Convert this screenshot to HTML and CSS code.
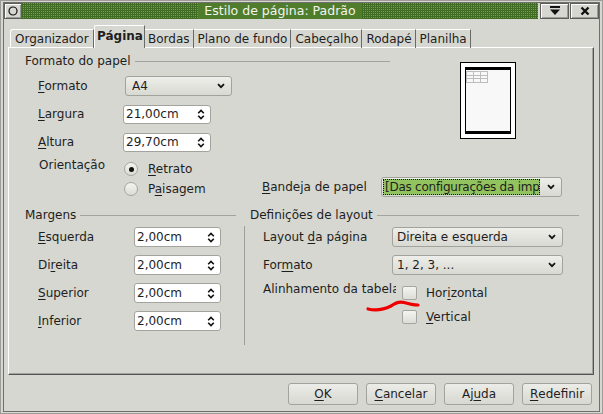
FILE: index.html
```html
<!DOCTYPE html>
<html lang="pt">
<head>
<meta charset="utf-8">
<title>Estilo de página: Padrão</title>
<link rel="stylesheet" href="styles.css">
</head>
<body>
<div class="window">
  <div class="frame">
    <div class="titlebar">
      <div class="tb-btn tb-menu"><svg width="10" height="10" viewBox="0 0 10 10"><circle cx="5" cy="5" r="4" fill="none" stroke="#111" stroke-width="1.2"/></svg></div>
      <div class="tb-title"><span>Estilo de página: Padrão</span></div>
      <div class="tb-btn tb-right"><svg width="12" height="10" viewBox="0 0 12 10"><rect x="1" y="0" width="10" height="2" fill="#111"/><path d="M1 3.5 H11 L6 9 Z" fill="#111"/></svg></div>
      <div class="tb-btn tb-right"><svg width="10" height="10" viewBox="0 0 10 10"><path d="M1.5 1.5 L8.5 8.5 M8.5 1.5 L1.5 8.5" stroke="#111" stroke-width="2.4"/></svg></div>
    </div>
    <div class="client">
      <div class="tabs">
        <div class="tab first">Organizador</div>
        <div class="tab active">Página</div>
        <div class="tab">Bordas</div>
        <div class="tab">Plano de fundo</div>
        <div class="tab">Cabeçalho</div>
        <div class="tab">Rodapé</div>
        <div class="tab">Planilha</div>
      </div>
      <div class="pane">
        <div class="paper">
          <div class="group-head paper-head"><span>Formato do papel</span><i class="rule"></i></div>
          <div class="preview">
            <div class="page">
              <div class="grid-mini"><i></i><i></i><i></i><i></i><i></i><i></i><i></i><i></i><i></i></div>
            </div>
          </div>
          <div class="row r-formato">
            <span class="lbl w85"><u>F</u>ormato</span>
            <div class="select s-a4"><span class="val">A4</span><svg class="chev" width="8" height="6" viewBox="0 0 8 6"><path d="M1 1.2 L4 4.2 L7 1.2" fill="none" stroke="#111" stroke-width="1.8"/></svg></div>
          </div>
          <div class="row r-largura">
            <span class="lbl w85"><u>L</u>argura</span>
            <div class="spin s-paper"><span class="val">21,00cm</span><svg class="arrows" width="8" height="11" viewBox="0 0 8 11"><path d="M1.2 4.3 L4 1.5 L6.8 4.3 M1.2 6.7 L4 9.5 L6.8 6.7" fill="none" stroke="#111" stroke-width="1.6"/></svg></div>
          </div>
          <div class="row r-altura">
            <span class="lbl w85"><u>A</u>ltura</span>
            <div class="spin s-paper"><span class="val">29,70cm</span><svg class="arrows" width="8" height="11" viewBox="0 0 8 11"><path d="M1.2 4.3 L4 1.5 L6.8 4.3 M1.2 6.7 L4 9.5 L6.8 6.7" fill="none" stroke="#111" stroke-width="1.6"/></svg></div>
          </div>
          <div class="orient">
            <span class="lbl w85 orient-lbl">Orientação</span>
            <div class="radios">
              <div class="radio-row"><span class="radio on"><i></i></span><span><u>R</u>etrato</span></div>
              <div class="radio-row"><span class="radio"></span><span>P<u>a</u>isagem</span></div>
            </div>
          </div>
          <div class="bandeja">
            <span class="lbl w119"><u>B</u>andeja de papel</span>
            <div class="select s-tray"><span class="tray-val">[Das configurações da impressora]</span><svg class="chev" width="8" height="6" viewBox="0 0 8 6"><path d="M1 1.2 L4 4.2 L7 1.2" fill="none" stroke="#111" stroke-width="1.8"/></svg></div>
          </div>
        </div>
        <div class="lower">
          <div class="margins">
            <div class="group-head margins-head"><span>Margens</span><i class="rule"></i></div>
            <div class="mrows">
              <div class="row"><span class="lbl w96"><u>E</u>squerda</span><div class="spin s-marg"><span class="val">2,00cm</span><svg class="arrows" width="8" height="11" viewBox="0 0 8 11"><path d="M1.2 4.3 L4 1.5 L6.8 4.3 M1.2 6.7 L4 9.5 L6.8 6.7" fill="none" stroke="#111" stroke-width="1.6"/></svg></div></div>
              <div class="row"><span class="lbl w96">Di<u>r</u>eita</span><div class="spin s-marg"><span class="val">2,00cm</span><svg class="arrows" width="8" height="11" viewBox="0 0 8 11"><path d="M1.2 4.3 L4 1.5 L6.8 4.3 M1.2 6.7 L4 9.5 L6.8 6.7" fill="none" stroke="#111" stroke-width="1.6"/></svg></div></div>
              <div class="row"><span class="lbl w96"><u>S</u>uperior</span><div class="spin s-marg"><span class="val">2,00cm</span><svg class="arrows" width="8" height="11" viewBox="0 0 8 11"><path d="M1.2 4.3 L4 1.5 L6.8 4.3 M1.2 6.7 L4 9.5 L6.8 6.7" fill="none" stroke="#111" stroke-width="1.6"/></svg></div></div>
              <div class="row"><span class="lbl w96"><u>I</u>nferior</span><div class="spin s-marg"><span class="val">2,00cm</span><svg class="arrows" width="8" height="11" viewBox="0 0 8 11"><path d="M1.2 4.3 L4 1.5 L6.8 4.3 M1.2 6.7 L4 9.5 L6.8 6.7" fill="none" stroke="#111" stroke-width="1.6"/></svg></div></div>
            </div>
          </div>
          <div class="layout">
            <div class="group-head layout-head"><span>Definições de layout</span><i class="rule"></i></div>
            <div class="lbody">
              <div class="row"><span class="lbl w129">Layout <u>d</u>a página</span><div class="select s-layout"><span class="val">Direita e esquerda</span><svg class="chev" width="8" height="6" viewBox="0 0 8 6"><path d="M1 1.2 L4 4.2 L7 1.2" fill="none" stroke="#111" stroke-width="1.8"/></svg></div></div>
              <div class="row"><span class="lbl w129">For<u>m</u>ato</span><div class="select s-layout"><span class="val">1, 2, 3, ...</span><svg class="chev" width="8" height="6" viewBox="0 0 8 6"><path d="M1 1.2 L4 4.2 L7 1.2" fill="none" stroke="#111" stroke-width="1.8"/></svg></div></div>
              <div class="check-row first-check"><span class="lbl align-lbl">Alinhamento da tabela</span><span class="check"></span><span>Hor<u>i</u>zontal</span></div>
              <div class="check-row second-check"><span class="check"></span><span><u>V</u>ertical</span></div>
            </div>
          </div>
        </div>
        <svg class="squiggle" width="60" height="16" viewBox="0 0 60 16"><path d="M3 11 C 11 13, 20 11, 26 8 C 30 5, 34 3, 39 4.5 C 44 6, 49 7, 53 7" fill="none" stroke="#ee0000" stroke-width="3.2" stroke-linecap="round"/></svg>
      </div>
      <div class="buttons">
        <div class="btn"><u>O</u>K</div>
        <div class="btn"><u>C</u>ancelar</div>
        <div class="btn">Aj<u>u</u>da</div>
        <div class="btn"><u>R</u>edefinir</div>
      </div>
    </div>
  </div>
</div>
</body>
</html>
```
FILE: styles.css
```css
* { box-sizing: border-box; }
html, body { margin: 0; padding: 0; }
body {
  width: 603px; height: 414px; overflow: hidden;
  font-family: "DejaVu Sans", sans-serif;
  font-size: 12px;
  color: #1e1e1e;
  background: #d6d7d0;
}
u { text-decoration: underline; text-underline-offset: 2px; }

.window {
  width: 603px; height: 414px;
  border: 1px solid #9c9c98;
  padding: 1px 2px 1px 2px;
  background: #d6d7d0;
}
.frame {
  height: 100%;
  border: 1px solid #6f6f6c;
  display: flex; flex-direction: column;
}

/* title bar */
.titlebar { height: 16px; display: flex; flex: none; }
.tb-btn {
  flex: none; height: 16px;
  background: #d6d7d0;
  border: 1px solid #5e5e5b;
  box-shadow: inset 1px 1px 0 #fff, inset -1px -1px 0 #9a9a96;
  display: flex; align-items: center; justify-content: center;
}
.tb-menu { width: 18px; }
.tb-right { width: 29px; margin-left: 1px; }
.tb-title {
  flex: 1; margin-right: 1px;
  background: conic-gradient(#73a347 25%, transparent 0) 0 0 / 2px 2px, #3f6c22;
  display: flex; align-items: center; justify-content: center;
}
.tb-title span {
  background: #4f7d2c; color: #f4f4f0;
  padding: 0 6px; line-height: 16px; font-size: 12.5px;
}

.client { flex: 1; display: flex; flex-direction: column; }

/* tabs */
.tabs { display: flex; align-items: flex-end; height: 23px; margin-top: 6px; padding-left: 6px; position: relative; z-index: 1; }
.tab {
  height: 19px; line-height: 18px;
  padding: 0 3px 0 4px;
  border-top: 1px solid #fff;
  border-right: 1px solid #6a6a67;
  white-space: nowrap;
}
.tab.first { border-left: 1px solid #fff; border-top-left-radius: 3px; padding-left: 4px; width: 84px; }
.tab.active {
  height: 23px; line-height: 21px; font-weight: bold;
  border-left: 1px solid #fff; border-top-left-radius: 2px;
  padding: 0 2px; width: 51px;
  background: #d6d7d0;
}
.tab.active + .tab { padding-left: 3px; }

.pane {
  position: relative;
  height: 328px; margin: -1px 5px 0 4px;
  border-top: 1px solid #fff; border-left: 1px solid #fff;
  border-right: 1px solid #555; border-bottom: 1px solid #555;
  box-shadow: inset -1px -1px 0 #a2a29e;
}

.group-head { display: flex; align-items: center; height: 14px; line-height: 14px; padding-left: 16px; white-space: nowrap; }
.group-head .rule { flex: 1; height: 1px; background: #a4a49f; margin-left: 4px; }

.lbl { flex: none; white-space: nowrap; }
.w85 { width: 85px; }
.w96 { width: 96px; }
.w119 { width: 119px; }
.w129 { width: 129px; }

/* paper section */
.paper {
  display: grid;
  grid-template-columns: 253px 198px 56px 1fr;
  grid-template-rows: 14px 20px 20px 20px 40px;
  row-gap: 8px;
  padding-top: 6px;
}
.paper-head { grid-column: 1 / 3; grid-row: 1; margin-right: 70px; }
.preview {
  grid-column: 3; grid-row: 1 / 5; align-self: start;
  margin-top: 8px; width: 56px; height: 77px;
  background: #fff; border: 1px solid #000; padding: 4px;
}
.page {
  width: 100%; height: 100%;
  background: #f8f8f8;
  border: 1px solid #000; border-top-width: 3px; border-bottom-width: 3px;
  padding: 1px 0 0 0;
}
.grid-mini { display: grid; grid-template-columns: repeat(3, 7px); grid-template-rows: repeat(3, 3.5px); border-top: 1px solid #bdbdbd; border-left: 1px solid #bdbdbd; width: 22px; }
.grid-mini i { border-right: 1px solid #bdbdbd; border-bottom: 1px solid #bdbdbd; }

.row { display: flex; align-items: center; height: 20px; }
.paper .row { grid-column: 1; padding-left: 29px; }
.r-formato { grid-row: 2; }
.r-largura { grid-row: 3; }
.r-altura { grid-row: 4; }

.select {
  height: 20px; display: flex; align-items: center;
  border: 1px solid #a3a39d; border-radius: 3px;
  background: linear-gradient(#eeeeea, #d9d9d3);
  padding: 0 6px 0 6px;
}
.select .val { flex: 1; white-space: nowrap; }
.select .chev { flex: none; }
.s-a4 { width: 107px; margin-left: 2px; }
.spin {
  height: 19px; display: flex; align-items: center;
  border: 1px solid #a3a39d; border-radius: 3px;
  background: #fff; padding: 0 5px 0 2px;
}
.spin .val { flex: 1; white-space: nowrap; }
.s-paper { width: 88px; }
.s-marg { width: 87px; height: 20px; }

.orient { grid-column: 1; grid-row: 5; display: flex; padding-left: 30px; margin-top: -1px; }
.orient-lbl { line-height: 14px; margin-top: -1px; }
.radios { display: flex; flex-direction: column; }
.radio-row { display: flex; align-items: center; height: 20px; }
.radio {
  width: 14px; height: 14px; border-radius: 50%;
  border: 1px solid #a6a6a0;
  background: linear-gradient(#f4f4f1, #dcdcd6);
  margin-right: 10px;
  display: flex; align-items: center; justify-content: center;
}
.radio.on i { width: 5px; height: 5px; border-radius: 50%; background: #111; }

.bandeja { grid-column: 2 / 5; grid-row: 5; align-self: end; display: flex; align-items: center; margin-bottom: 3px; }
.s-tray { width: 181px; padding: 0 6px 0 1px; }
.tray-val {
  flex: 1; overflow: hidden; white-space: nowrap;
  background: #93c35f; border: 1px dotted #111;
  height: 16px; line-height: 14px; padding-left: 1px; margin-right: 7px;
  letter-spacing: -0.25px;
}

/* lower */
.lower { display: flex; margin-top: 8px; }
.margins { width: 235px; }
.margins-head { margin-right: 8px; }
.mrows { display: flex; flex-direction: column; gap: 8px; margin-top: 5px; padding-left: 29px; }

.layout { flex: 1; }
.layout-head { padding-left: 6px; margin-right: 14px; }
.lbody {
  margin-top: 4px; height: 119px;
  border-left: 1px solid #9f9f9a;
  padding-left: 18px; padding-top: 1px;
  display: flex; flex-direction: column;
}
.lbody .row { margin-bottom: 8px; }
.s-layout { width: 171px; padding-left: 4px; }
.check-row { display: flex; align-items: center; height: 22px; }
.first-check { margin-top: -1px; }
.second-check { margin-top: 2px; padding-left: 139px; }
.align-lbl { width: 133px; overflow: hidden; align-self: flex-start; margin-right: 6px; line-height: 14px; }
.check {
  width: 15px; height: 14px; flex: none;
  border: 1px solid #a6a6a0; border-radius: 2px;
  background: linear-gradient(#f4f4f1, #dddcd6);
  margin-right: 9px;
}

.squiggle { position: absolute; left: 356px; top: 250px; }

/* buttons */
.buttons { display: flex; justify-content: flex-end; gap: 8px; margin-top: 8px; padding-right: 7px; }
.btn {
  width: 70px; height: 22px;
  border: 1px solid #a3a39d; border-radius: 3px;
  background: linear-gradient(#ecece8, #d8d8d2);
  display: flex; align-items: center; justify-content: center;
}
```
